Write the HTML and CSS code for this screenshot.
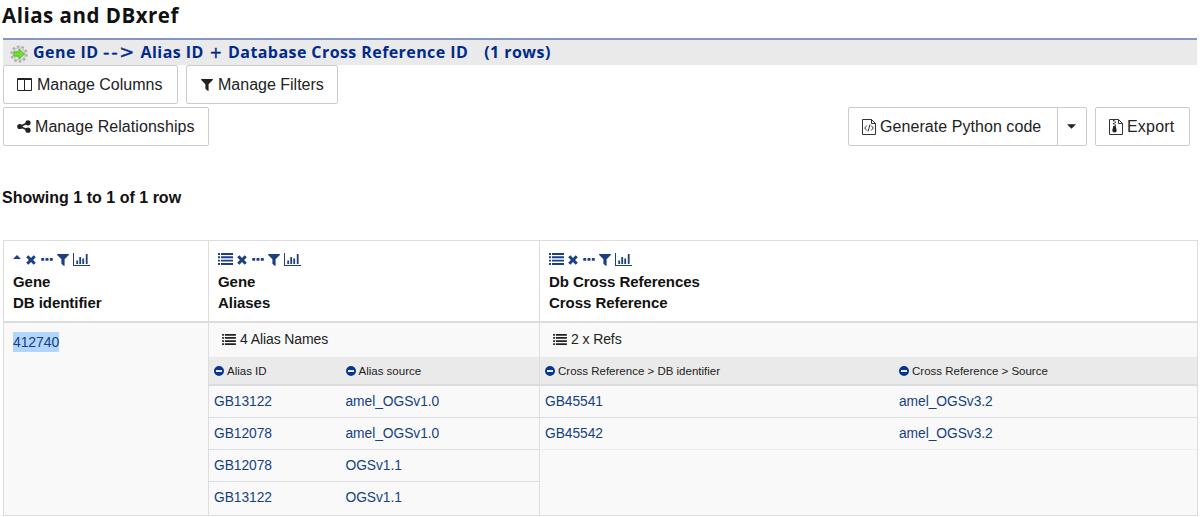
FILE: index.html
```html
<!DOCTYPE html>
<html lang="en">
<head>
<meta charset="utf-8">
<title>Alias and DBxref</title>
<link rel="stylesheet" href="styles.css">
</head>
<body>
<svg class="defs" width="0" height="0" aria-hidden="true">
  <symbol id="list" viewBox="0 0 15 12"><path d="M0 0h2v1.900H0zM3 0H15v1.900H3zM0 3.300h2v1.900H0zM3 3.300H15v1.900H3zM0 6.700h2v1.900H0zM3 6.700H15v1.900H3zM0 10h2v1.900H0zM3 10H15v1.900H3z"/></symbol>
  <symbol id="times" viewBox="0 0 10 10"><path d="M2.300.2 5 2.900 7.700.2 9.800 2.300 7.100 5 9.800 7.700 7.700 9.800 5 7.100 2.300 9.800.2 7.700 2.900 5 .2 2.300z"/></symbol>
  <symbol id="dots" viewBox="0 0 12 3"><path d="M.7 0h2q.5 0 .5.500v1.700q0 .5-.5.500h-2q-.5 0-.5-.5V.500Q.2 0 .7 0zM5 0h2q.5 0 .5.500v1.700q0 .5-.5.500H5q-.5 0-.5-.5V.500Q4.500 0 5 0zM9.300 0h2q.5 0 .5.500v1.700q0 .5-.5.500h-2q-.5 0-.5-.5V.500Q8.800 0 9.300 0z"/></symbol>
  <symbol id="funnel" viewBox="0 0 12 12"><path d="M.4 0h11.200q.7.300.2 1L7.600 5.300v6.300q-.3.600-.9.200L4.600 9.900q-.2-.2-.2-.5V5.300L.2 1Q-.3.300.4 0z"/></symbol>
  <symbol id="chart" viewBox="0 0 17 13"><path d="M0 0h1v12h16v1H0zM3.300 7.500h1.800V11H3.300zM6.300 4h1.800v7H6.300zM9.300 5.500h1.800V11H9.300zM12.800 1h1.800v10h-1.800z"/></symbol>
  <symbol id="minus" viewBox="0 0 10 10"><path fill-rule="evenodd" d="M5 0a5 5 0 1 1 0 10A5 5 0 0 1 5 0zM2 4.100v1.800h6V4.100z"/></symbol>
</svg>

<h1 class="title">Alias and DBxref</h1>
<div class="query">
  <svg class="gear" viewBox="0 0 18 18"><circle cx="9" cy="9" r="7.600" fill="none" stroke="#aaa" stroke-width="2" stroke-dasharray="2.600 2.175"/><circle cx="9" cy="9" r="6.200" fill="#e2e2e2" stroke="#b8b8b8"/><path d="M4 6.800h5V4l5.500 5L9 14v-2.800H4z" fill="#6fe02c" stroke="#4cae1c" stroke-width=".8"/></svg>
  <div class="query-name"><span>Gene ID </span><span class="arrow">--&gt;</span><span> Alias ID </span><span class="plus">+</span><span class="tail"> Database Cross Reference ID</span></div>
  <div class="query-count">(1 rows)</div>
</div>

<div class="bar">
  <button class="btn columns"><svg class="i-col" viewBox="0 0 15 13"><path d="M.5.500h14v12H.5zM7.500.500v12M.5 1.500h14" fill="none" stroke="#222"/></svg><span>Manage Columns</span></button>
  <button class="btn filters"><svg class="i-fil"><use href="#funnel"/></svg><span>Manage Filters</span></button>
</div>
<div class="bar second">
  <button class="btn relations"><svg class="i-share" viewBox="0 0 14 13"><path d="M11 2.800 3 6.500l8 3.700" fill="none" stroke="#222" stroke-width="1.600"/><circle cx="11" cy="2.800" r="2.600"/><circle cx="2.800" cy="6.500" r="2.600"/><circle cx="11" cy="10.200" r="2.600"/></svg><span>Manage Relationships</span></button>
  <div class="group">
    <button class="btn code"><svg class="i-file" viewBox="0 0 14 16"><path d="M.5.500h9l4 4v11H.5zM9.500.500v4h4M4.800 6.500 2.700 9l2.100 2.500M9.200 6.500 11.300 9l-2.100 2.500M7.900 5.500 6.100 12.500" fill="none" stroke="#333"/></svg><span>Generate Python code</span></button>
    <button class="btn drop" aria-label="More"><svg class="i-caret" viewBox="0 0 8 4"><path d="M0 0h8L4 4z"/></svg></button>
  </div>
  <button class="btn export"><svg class="i-file" viewBox="0 0 14 16"><path d="M.5.500h9l4 4v11H.5zM9.500.500v4h4" fill="none" stroke="#333"/><path d="M4 1h1.500v1.200H4zM5.500 2.500H7v1.200H5.500zM4 4h1.500v1.200H4zM5.500 5.500H7v1.200H5.500zM4.300 7h2.400l1 4.500q0 2-2.200 2t-2.200-2z"/></svg><span>Export</span></button>
</div>

<p class="showing"><span>Showing 1 to 1 of 1 row</span></p>

<div class="table">
  <div class="head">
    <div class="icons"><svg class="i-up" viewBox="0 0 8 4"><path d="M0 4h8L4 0z"/></svg><svg class="i-x"><use href="#times"/></svg><svg class="i-dots"><use href="#dots"/></svg><svg class="i-f"><use href="#funnel"/></svg><svg class="i-chart"><use href="#chart"/></svg></div>
    <div>Gene</div><div>DB identifier</div>
  </div>
  <div class="head">
    <div class="icons"><svg class="i-list"><use href="#list"/></svg><svg class="i-x"><use href="#times"/></svg><svg class="i-dots"><use href="#dots"/></svg><svg class="i-f"><use href="#funnel"/></svg><svg class="i-chart"><use href="#chart"/></svg></div>
    <div>Gene</div><div>Aliases</div>
  </div>
  <div class="head">
    <div class="icons"><svg class="i-list"><use href="#list"/></svg><svg class="i-x"><use href="#times"/></svg><svg class="i-dots"><use href="#dots"/></svg><svg class="i-f"><use href="#funnel"/></svg><svg class="i-chart"><use href="#chart"/></svg></div>
    <div>Db Cross References</div><div>Cross Reference</div>
  </div>
  <div class="cell first"><a class="selected">412740</a></div>
  <div class="cell aliases">
    <div class="summary"><svg class="i-sum"><use href="#list"/></svg><span>4 Alias Names</span></div>
    <div class="row sub"><div><svg class="i-minus"><use href="#minus"/></svg>Alias ID</div><div><svg class="i-minus"><use href="#minus"/></svg>Alias source</div></div>
    <div class="row"><a>GB13122</a><a>amel_OGSv1.0</a></div>
    <div class="row"><a>GB12078</a><a>amel_OGSv1.0</a></div>
    <div class="row"><a>GB12078</a><a>OGSv1.1</a></div>
    <div class="row end"><a>GB13122</a><a>OGSv1.1</a></div>
  </div>
  <div class="cell refs">
    <div class="summary"><svg class="i-sum"><use href="#list"/></svg><span>2 x Refs</span></div>
    <div class="row sub"><div><svg class="i-minus"><use href="#minus"/></svg>Cross Reference &gt; DB identifier</div><div><svg class="i-minus"><use href="#minus"/></svg>Cross Reference &gt; Source</div></div>
    <div class="row"><a>GB45541</a><a>amel_OGSv3.2</a></div>
    <div class="row last"><a>GB45542</a><a>amel_OGSv3.2</a></div>
  </div>
</div>
</body>
</html>
```
FILE: styles.css
```css
* { box-sizing: border-box; }
body { margin: 0; padding: 0 3px; height: 517px; overflow: hidden; background: #fff; color: #111; font-family: "Liberation Sans", Arial, sans-serif; }
svg { display: block; flex: none; fill: currentColor; }
.defs { position: absolute; }
.title { margin: 0 0 0 -1px; height: 38px; font: 700 20.5px/30px "Open Sans", sans-serif; letter-spacing: 0.5px; white-space: nowrap; }
.query { display: flex; height: 27px; border-top: 2px solid #8496bf; background: #eaeaea; color: #002a8c; font: 700 16px/24px "Open Sans", sans-serif; letter-spacing: 0.45px; padding-left: 7px; white-space: pre; }
.gear { width: 18px; height: 18px; margin: 5px 5px 0 0; }
.arrow, .plus { font-family: "DejaVu Sans", sans-serif; font-weight: 400; -webkit-text-stroke: 0.4px; line-height: 1; }
.arrow { font-size: 18px; letter-spacing: 1.6px; }
.plus { font-size: 15px; margin: 0 1px; }
.tail { letter-spacing: 0.42px; }
.query-count { margin-left: 16px; }
.bar { display: flex; gap: 8px; height: 39px; }
.second { margin-top: 3px; padding-right: 7px; }
.btn { display: flex; align-items: center; height: 39px; margin: 0; padding: 0 0 0 13px; border: 1px solid #ccc; border-radius: 2px; background: #fff; color: #222; font: 16px/20px "Liberation Sans", Arial, sans-serif; white-space: nowrap; }
.columns { width: 175px; }
.filters { width: 152px; }
.relations { width: 206px; margin-right: auto; }
.code { width: 210px; border-radius: 2px 0 0 2px; }
.drop { width: 30px; margin-left: -1px; padding-left: 9px; border-radius: 0 2px 2px 0; }
.export { width: 95px; }
.group { display: flex; }
.code span, .relations span { letter-spacing: 0.06px; }
.export span { letter-spacing: 0.2px; }
.i-col { width: 15px; height: 13px; margin-right: 5px; }
.i-fil { width: 12px; height: 12px; margin: 0 5px 0 1px; }
.i-share { width: 14px; height: 13px; margin-right: 4px; }
.i-file { width: 14px; height: 16px; margin-right: 4px; }
.i-caret { width: 9px; height: 5px; }
.showing { margin: 42px 0 0 -1px; height: 52px; font-size: 16px; font-weight: 700; line-height: 20px; letter-spacing: 0.02px; }
.table { display: grid; grid-template-columns: 204px 331px 1fr; width: 1195px; height: 276px; grid-template-rows: 82px 192px; border: 1px solid #ddd; line-height: 21px; }
.head { padding: 11px 9px 0; border-bottom: 2px solid #ddd; font-size: 15px; font-weight: 700; white-space: nowrap; letter-spacing: -0.05px; }
.head + .head, .aliases, .refs { border-left: 1px solid #ddd; }
.icons { display: flex; align-items: center; height: 14px; margin-bottom: 5px; color: #1c3f83; }
.i-up { width: 8px; height: 4px; margin: 0 5px 5px 0; }
.i-list { width: 15px; height: 12px; margin-right: 4px; }
.i-x { width: 10px; height: 10px; margin: 1px 5px 0 0; }
.i-dots { width: 12px; height: 3px; margin-right: 4px; }
.i-f { width: 12px; height: 12px; margin: 1px 4px 0 0; }
.i-chart { width: 17px; height: 13px; }
.cell { background: #f9f9f9; font-size: 14px; }
.first { padding: 9px; }
a { color: #153f83; }
.selected { display: inline-block; height: 20px; line-height: 20px; background: #b1d5fc; letter-spacing: -0.1px; }
.summary { display: flex; align-items: center; height: 34px; padding: 0 0 2px 13px; color: #222; letter-spacing: -0.1px; }
.i-sum { width: 14px; height: 11px; margin-right: 4px; }
.row { display: grid; grid-template-columns: 131.5px 1fr; height: 32px; padding: 0 5px; border-bottom: 1px solid #ddd; line-height: 31px; font-size: 13.8px; letter-spacing: -0.05px; }
.refs .row { grid-template-columns: 354px 1fr; }
.row.sub { height: 29px; background: #eaeaea; border-bottom: 2px solid #dcdcdc; line-height: 28px; font-size: 11.5px; color: #222; letter-spacing: 0; }
.sub > div { display: flex; align-items: center; }
.i-minus { width: 10px; height: 10px; margin-right: 3px; color: #06368f; }
.row.last { border-bottom: 1px solid #eee; }
.row.end { border-bottom: 0; }
```
